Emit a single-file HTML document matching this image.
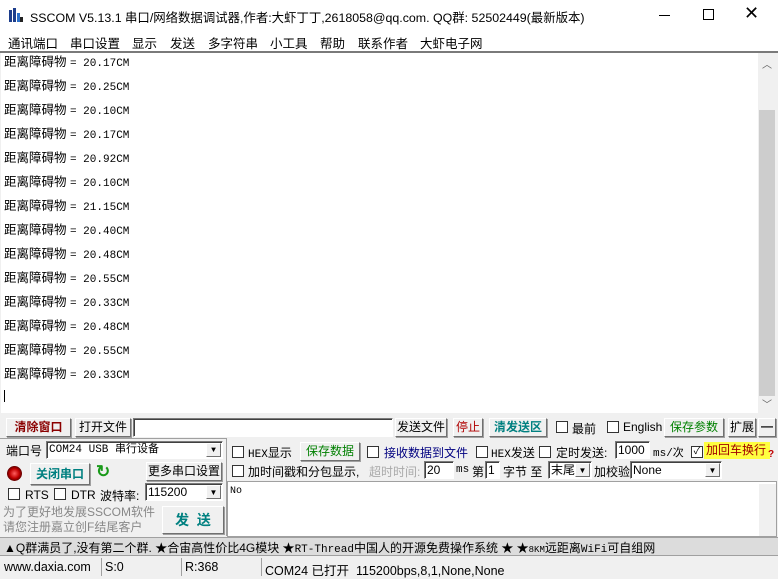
<!DOCTYPE html>
<html><head><meta charset="utf-8"><style>
*{margin:0;padding:0;box-sizing:border-box}
body{width:778px;height:577px;overflow:hidden;background:#f0f0f0;font-family:"Liberation Sans","Noto Sans CJK SC",sans-serif;font-size:12px;color:#000;position:relative}
.a{position:absolute;white-space:nowrap}
.btn{position:absolute;background:#f0f0f0;border:1px solid;border-color:#fff #707070 #707070 #fff;box-shadow:1px 1px 0 #a0a0a0;text-align:center;white-space:nowrap}
.cb{position:absolute;width:12px;height:12px;background:#fff;border:1px solid #333}
.in{position:absolute;background:#fff;border:1px solid;border-color:#7a7a7a #fff #fff #7a7a7a;box-shadow:inset 1px 1px 0 #404040;white-space:nowrap;padding-left:2px}
.dd{position:absolute;right:1px;top:1px;bottom:1px;width:15px;background:#f0f0f0;border:1px solid;border-color:#fff #707070 #707070 #fff;font-size:8px;text-align:center;line-height:14px}
.mono{font-family:"Liberation Mono","Noto Sans CJK SC",monospace;font-size:11px}
#lines div{height:24px;line-height:24px;overflow:visible}
.m{position:absolute;top:33px;font-size:12.5px}
</style></head><body>
<div class="a" style="left:0;top:0;width:778px;height:31px;background:#fff"></div>
<svg class="a" style="left:8px;top:7px" width="16" height="16"><rect x="1" y="3" width="3" height="12" fill="#1c3d8c"/><rect x="5" y="1" width="3" height="14" fill="#1c3d8c"/><rect x="9" y="6" width="3" height="9" fill="#2a6fc9"/><rect x="12" y="10" width="3" height="5" fill="#222"/></svg>
<div class="a" style="left:30px;top:8px;font-size:12.4px">SSCOM V5.13.1 串口/网络数据调试器,作者:大虾丁丁,2618058@qq.com. QQ群: 52502449(最新版本)</div>
<div class="a" style="left:659px;top:15px;width:11px;height:1px;background:#000"></div>
<div class="a" style="left:703px;top:9px;width:11px;height:11px;border:1px solid #000"></div>
<div class="a" style="left:744px;top:3px;font-size:18px;font-weight:300">✕</div>
<div class="a" style="left:0;top:31px;width:778px;height:21px;background:#fff"></div>
<div class="m" style="left:8px">通讯端口</div>
<div class="m" style="left:70px">串口设置</div>
<div class="m" style="left:132px">显示</div>
<div class="m" style="left:170px">发送</div>
<div class="m" style="left:208px">多字符串</div>
<div class="m" style="left:270px">小工具</div>
<div class="m" style="left:320px">帮助</div>
<div class="m" style="left:358px">联系作者</div>
<div class="m" style="left:420px">大虾电子网</div>
<div class="a" style="left:0;top:51px;width:778px;height:2px;background:#7a7a7a"></div>
<div class="a" style="left:1px;top:53px;width:757px;height:360px;background:#fff"></div>
<div class="a" style="left:758px;top:53px;width:18px;height:360px;background:#f0f0f0"></div>
<div class="a" style="left:759px;top:110px;width:16px;height:286px;background:#cdcdcd"></div>
<div class="a" style="left:762px;top:56px;font-size:10px;color:#606060">︿</div>
<div class="a" style="left:762px;top:396px;font-size:10px;color:#606060">﹀</div>
<div class="a" style="left:4px;top:390px;width:1px;height:12px;background:#000"></div>
<div class="a" id="lines" style="left:4px;top:50px;font-size:12.5px">
<div>距离障碍物 <span class="mono">= 20.17CM</span></div>
<div>距离障碍物 <span class="mono">= 20.25CM</span></div>
<div>距离障碍物 <span class="mono">= 20.10CM</span></div>
<div>距离障碍物 <span class="mono">= 20.17CM</span></div>
<div>距离障碍物 <span class="mono">= 20.92CM</span></div>
<div>距离障碍物 <span class="mono">= 20.10CM</span></div>
<div>距离障碍物 <span class="mono">= 21.15CM</span></div>
<div>距离障碍物 <span class="mono">= 20.40CM</span></div>
<div>距离障碍物 <span class="mono">= 20.48CM</span></div>
<div>距离障碍物 <span class="mono">= 20.55CM</span></div>
<div>距离障碍物 <span class="mono">= 20.33CM</span></div>
<div>距离障碍物 <span class="mono">= 20.48CM</span></div>
<div>距离障碍物 <span class="mono">= 20.55CM</span></div>
<div>距离障碍物 <span class="mono">= 20.33CM</span></div>
</div>
<div class="btn" style="left:6px;top:418px;width:65px;height:19px;color:#8b0000;font-weight:bold;line-height:17px">清除窗口</div>
<div class="btn" style="left:75px;top:418px;width:56px;height:19px;line-height:17px">打开文件</div>
<div class="in" style="left:133px;top:418px;width:260px;height:19px"></div>
<div class="btn" style="left:395px;top:418px;width:52px;height:19px;line-height:17px">发送文件</div>
<div class="btn" style="left:453px;top:418px;width:30px;height:19px;line-height:17px;color:#b00000">停止</div>
<div class="btn" style="left:489px;top:418px;width:58px;height:19px;line-height:17px;color:#008080;font-weight:bold">清发送区</div>
<div class="cb" style="left:556px;top:421px"></div><div class="a" style="left:572px;top:420px">最前</div>
<div class="cb" style="left:607px;top:421px"></div><div class="a" style="left:623px;top:420px">English</div>
<div class="btn" style="left:664px;top:418px;width:60px;height:19px;line-height:17px;color:#008000">保存参数</div>
<div class="btn" style="left:728px;top:418px;width:28px;height:19px;line-height:17px">扩展</div>
<div class="btn" style="left:758px;top:418px;width:18px;height:19px;line-height:15px;font-weight:bold">—</div>
<div class="a" style="left:0;top:438px;width:226px;height:1px;background:#a0a0a0"></div>
<div class="a" style="left:6px;top:442px">端口号</div>
<div class="in mono" style="left:46px;top:441px;width:177px;height:18px;line-height:16px">COM24 USB 串行设备<div class="dd">▼</div></div>
<div class="a" style="left:7px;top:466px;width:15px;height:15px;border-radius:50%;background:radial-gradient(circle,#ff6060 0,#c00000 45%,#600000 70%,#ccc 75%)"></div>
<div class="btn" style="left:30px;top:463px;width:60px;height:22px;line-height:20px;color:#008080;font-weight:bold">关闭串口</div>
<div class="a" style="left:96px;top:462px;font-size:17px;color:#1a9a1a;font-weight:bold">↻</div>
<div class="btn" style="left:146px;top:462px;width:76px;height:19px;line-height:17px">更多串口设置</div>
<div class="cb" style="left:8px;top:488px"></div><div class="a" style="left:25px;top:488px">RTS</div>
<div class="cb" style="left:54px;top:488px"></div><div class="a" style="left:71px;top:488px">DTR</div>
<div class="a" style="left:100px;top:487px">波特率:</div>
<div class="in" style="left:145px;top:483px;width:78px;height:18px;line-height:16px">115200<div class="dd">▼</div></div>
<div class="a" style="left:3px;top:505px;color:#888;line-height:15px">为了更好地发展SSCOM软件<br>请您注册嘉立创F结尾客户</div>
<div class="btn" style="left:162px;top:506px;width:62px;height:28px;line-height:26px;color:#008080;font-weight:bold;font-size:14px">发&nbsp;&nbsp;送</div>
<div class="a" style="left:226px;top:438px;width:1px;height:98px;background:#a0a0a0"></div>
<div class="cb" style="left:232px;top:446px"></div><div class="a" style="left:248px;top:444px"><span class="mono">HEX</span>显示</div>
<div class="btn" style="left:300px;top:442px;width:60px;height:19px;line-height:17px;color:#008000">保存数据</div>
<div class="cb" style="left:367px;top:446px"></div><div class="a" style="left:384px;top:444px;color:#000080">接收数据到文件</div>
<div class="cb" style="left:476px;top:446px"></div><div class="a" style="left:491px;top:444px"><span class="mono">HEX</span>发送</div>
<div class="cb" style="left:539px;top:446px"></div><div class="a" style="left:556px;top:444px">定时发送:</div>
<div class="in" style="left:615px;top:441px;width:35px;height:18px;line-height:16px">1000</div>
<div class="a mono" style="left:653px;top:444px">ms/次</div>
<div class="cb" style="left:691px;top:446px;font-size:10px;line-height:10px;text-align:center">✓</div>
<div class="a" style="left:704px;top:442px;width:66px;height:17px;background:#ffff40;color:#a00000;line-height:17px;padding-left:2px">加回车换行</div>
<div class="a" style="left:768px;top:449px;color:#c00000;font-size:10px;font-weight:bold">?</div>
<div class="cb" style="left:232px;top:465px"></div><div class="a" style="left:248px;top:463px">加时间戳和分包显示,</div>
<div class="a" style="left:369px;top:463px;color:#aaa">超时时间:</div>
<div class="in" style="left:424px;top:461px;width:30px;height:18px;line-height:16px">20</div>
<div class="a mono" style="left:456px;top:464px">ms</div>
<div class="a" style="left:472px;top:463px">第</div>
<div class="in" style="left:485px;top:461px;width:15px;height:18px;line-height:16px">1</div>
<div class="a" style="left:503px;top:463px">字节 至</div>
<div class="in" style="left:548px;top:461px;width:44px;height:18px;line-height:16px">末尾<div class="dd">▼</div></div>
<div class="a" style="left:594px;top:463px">加校验</div>
<div class="in" style="left:630px;top:461px;width:92px;height:18px;line-height:16px">None<div class="dd">▼</div></div>
<div class="in" style="left:227px;top:481px;width:550px;height:56px;box-shadow:none;border-color:#a0a0a0"><span class="mono" style="font-size:10px">No</span></div>
<div class="a" style="left:759px;top:484px;width:17px;height:52px;background:#f0f0f0"></div>
<div class="a" style="left:0;top:537px;width:778px;height:19px;background:#dcdcdc;border-top:1px solid #a0a0a0;border-bottom:1px solid #a0a0a0"></div>
<div class="a" style="left:4px;top:539px">▲Q群满员了,没有第二个群. ★合宙高性价比4G模块 ★<span class="mono">RT-Thread</span>中国人的开源免费操作系统 ★ ★<span class="mono" style="font-size:9px">8KM</span>远距离<span class="mono">WiFi</span>可自组网</div>
<div class="a" style="left:0;top:557px;width:778px;height:20px;background:#f0f0f0"></div>
<div class="a" style="left:4px;top:560px;font-size:12.5px">www.daxia.com</div>
<div class="a" style="left:101px;top:558px;width:1px;height:18px;background:#a0a0a0"></div>
<div class="a" style="left:105px;top:560px;font-size:12.5px">S:0</div>
<div class="a" style="left:181px;top:558px;width:1px;height:18px;background:#a0a0a0"></div>
<div class="a" style="left:185px;top:560px;font-size:12.5px">R:368</div>
<div class="a" style="left:261px;top:558px;width:1px;height:18px;background:#a0a0a0"></div>
<div class="a" style="left:265px;top:560px;font-size:12.5px">COM24 已打开&nbsp;&nbsp;115200bps,8,1,None,None</div>
</body></html>
